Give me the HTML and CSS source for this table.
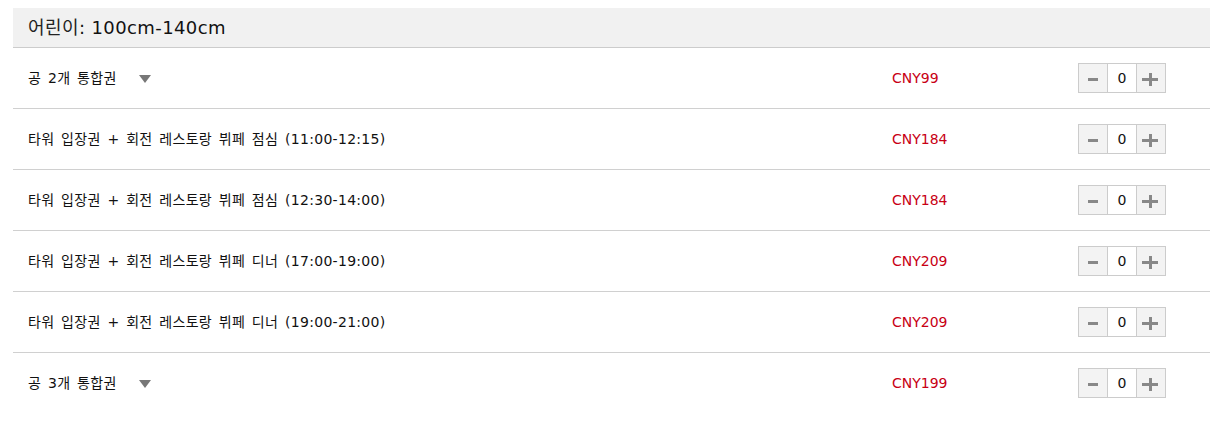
FILE: index.html
```html
<!DOCTYPE html>
<html lang="ko">
<head>
<meta charset="utf-8">
<link rel="stylesheet" href="styles.css">
</head>
<body>
<div class="wrap">
  <div class="head"><span class="ko">어린이</span>: 100cm-140cm</div>
  <div class="row">
    <div class="name">공 2개 통합권<span class="tri"></span></div>
    <div class="price">CNY99</div>
    <div class="qty"><span class="btn minus"></span><span class="val">0</span><span class="btn plus"></span></div>
  </div>
  <div class="row">
    <div class="name">타워 입장권 + 회전 레스토랑 뷔페 점심 (11:00-12:15)</div>
    <div class="price">CNY184</div>
    <div class="qty"><span class="btn minus"></span><span class="val">0</span><span class="btn plus"></span></div>
  </div>
  <div class="row">
    <div class="name">타워 입장권 + 회전 레스토랑 뷔페 점심 (12:30-14:00)</div>
    <div class="price">CNY184</div>
    <div class="qty"><span class="btn minus"></span><span class="val">0</span><span class="btn plus"></span></div>
  </div>
  <div class="row">
    <div class="name">타워 입장권 + 회전 레스토랑 뷔페 디너 (17:00-19:00)</div>
    <div class="price">CNY209</div>
    <div class="qty"><span class="btn minus"></span><span class="val">0</span><span class="btn plus"></span></div>
  </div>
  <div class="row">
    <div class="name">타워 입장권 + 회전 레스토랑 뷔페 디너 (19:00-21:00)</div>
    <div class="price">CNY209</div>
    <div class="qty"><span class="btn minus"></span><span class="val">0</span><span class="btn plus"></span></div>
  </div>
  <div class="row last">
    <div class="name">공 3개 통합권<span class="tri"></span></div>
    <div class="price">CNY199</div>
    <div class="qty"><span class="btn minus"></span><span class="val">0</span><span class="btn plus"></span></div>
  </div>
</div>
</body>
</html>
```
FILE: styles.css
```css
html, body { margin: 0; padding: 0; background: #fff; }
body { padding: 8px 13px 0 13px; font-family: "DejaVu Sans", Verdana, "Noto Sans CJK KR", sans-serif; color: #111; }
.wrap { width: 1197px; }
.head {
  height: 39px;
  background: #f1f1f1;
  border-bottom: 1px solid #cccccc;
  padding-left: 15px;
  font-size: 18px;
  line-height: 37px;
  letter-spacing: 0.4px;
  color: #111;
}
.head .ko { font-family: "Noto Sans CJK KR", sans-serif; font-weight: 400; color: #222; }
.row {
  height: 60px;
  border-bottom: 1px solid #d0d0d0;
  display: flex;
  align-items: center;
  padding-left: 15px;
  font-size: 14px;
}
.row.last { border-bottom: none; }
.name { width: 864px; display: flex; align-items: center; color: #111; word-spacing: 2px; letter-spacing: 0.3px; line-height: 18px; }
.tri {
  width: 0; height: 0;
  margin-left: 22px;
  margin-top: 1px;
  border-left: 6px solid transparent;
  border-right: 6px solid transparent;
  border-top: 8px solid #777;
}
.price { width: 186px; color: #c80014; }
.qty { display: flex; height: 30px; border: 1px solid #cccccc; box-sizing: border-box; margin-top: -1px; }
.btn { width: 28px; background: #f3f3f3; position: relative; }
.val { width: 28px; border-left: 1px solid #ccc; border-right: 1px solid #ccc; text-align: center; line-height: 28px; font-size: 14px; color: #111; background: #fff; }
.btn::before { content: ""; position: absolute; left: 9px; top: 14px; width: 10px; height: 3px; background: #888; }
.plus::before { left: 5px; width: 16px; }
.plus::after { content: ""; position: absolute; left: 12px; top: 9px; width: 3px; height: 13px; background: #888; }
```
